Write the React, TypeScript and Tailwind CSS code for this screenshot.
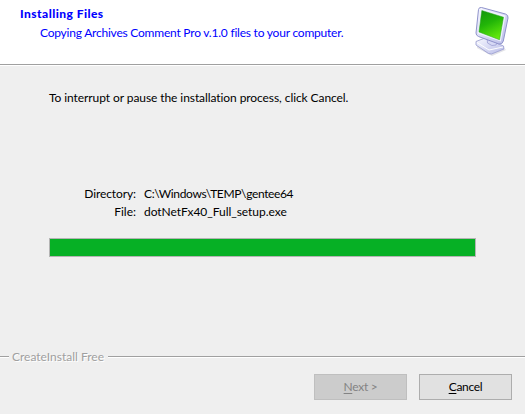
import React from "react";

function ComputerIcon() {
  return (
    <svg width="42" height="54" viewBox="0 0 42 54" aria-hidden="true">
      <defs>
        <linearGradient id="screen" x1="0.3" y1="0" x2="0.7" y2="1">
          <stop offset="0" stopColor="#159b0a" />
          <stop offset="0.4" stopColor="#22b508" />
          <stop offset="1" stopColor="#69ee0c" />
        </linearGradient>
        <linearGradient id="shell" x1="0" y1="0" x2="1" y2="1">
          <stop offset="0" stopColor="#f7f8ff" />
          <stop offset="1" stopColor="#b9bce8" />
        </linearGradient>
      </defs>
      <path d="M3 43 L17 52 L31 47 L32 48 L18 54 L3 46Z" fill="#e4e4e8" />
      <path d="M2 39.5 L11 36 L29.5 44 L30 47 L17.5 52 L14.5 51.5 L2 43Z" fill="url(#shell)" stroke="#9699cd" strokeWidth="0.8" />
      <path d="M3 40.5 L15 48 L29 45" fill="none" stroke="#ffffff" strokeWidth="1" />
      <path d="M13 35 L13.5 41 Q18 45 22 43 L24 38Z" fill="#d7d9f5" stroke="#9598cf" strokeWidth="0.7" />
      <path d="M7.5 5.5 Q5 5 4.5 7.5 L2 31 Q2 33.5 4.5 34.5 L25 42 Q28.5 42.5 29.3 39 L34 16 Q34.5 13 31.5 12Z" fill="url(#shell)" stroke="#9093cc" strokeWidth="1" />
      <path d="M7 7 L31.5 13.5 L26.8 39.5 L4 31.5Z" fill="#f2f3ff" />
      <path d="M7.8 8.5 L29.5 15.2 L25.5 37.8 L5 30Z" fill="url(#screen)" stroke="#23a01a" strokeWidth="0.5" />
    </svg>
  );
}

export default function App() {
  return (
    <main className="flex h-[414px] w-[525px] flex-col overflow-hidden bg-[#efefef] font-['Lato','Noto_Sans',sans-serif] text-[12px] leading-4 whitespace-nowrap text-black [font-variant-ligatures:none]">
      <header className="flex h-[66px] shrink-0 justify-between border-b border-white bg-white text-[#0000ff] shadow-[inset_0_-1px_0_#a0a0a0]">
        <div className="pt-[6px] pl-5">
          <h1 className="font-black tracking-[0.46px]">Installing Files</h1>
          <p className="mt-[3px] pl-5 tracking-[-0.22px]">Copying Archives Comment Pro v.1.0 files to your computer.</p>
        </div>
        <div className="mr-[9px] pt-[2px]">
          <ComputerIcon />
        </div>
      </header>
      <section className="h-[290px] shrink-0 pt-[24px] pr-[49px] pl-[49px]">
        <p className="tracking-[-0.08px]">To interrupt or pause the installation process, click Cancel.</p>
        <dl className="mt-[80px] grid grid-cols-[87px_1fr] gap-x-2 gap-y-[2px]">
          <dt className="text-right tracking-[-0.1px]">Directory:</dt>
          <dd className="tracking-[-0.36px]">C:\Windows\TEMP\gentee64</dd>
          <dt className="text-right">File:</dt>
          <dd className="tracking-[-0.04px]">dotNetFx40_Full_setup.exe</dd>
        </dl>
        <div className="mt-[18px] h-[19px] border border-[#b4b4b4] bg-[#06b025]" />
      </section>
      <footer>
        <div className="flex h-0 items-center">
          <span className="mt-[2px] h-[2px] w-[9px] border-b border-white bg-[#a0a0a0]" />
          <span className="w-[99px] pt-[2px] pl-[3px] text-[#a0a0a0] [text-shadow:1px_1px_0_#ffffff]">CreateInstall Free</span>
          <span className="mt-[2px] h-[2px] grow border-b border-white bg-[#a0a0a0]" />
        </div>
        <div className="mt-[18px] flex justify-end gap-3 pr-[13px]">
          <button disabled className="h-[26px] w-[93px] border border-[#bfbfbf] bg-[#cccccc] tracking-[-0.3px] text-[#838383]">
            <span className="underline underline-offset-2">N</span>ext &gt;
          </button>
          <button className="h-[26px] w-[93px] border border-[#adadad] bg-[#e1e1e1] tracking-[-0.3px]">
            <span className="underline underline-offset-2">C</span>ancel
          </button>
        </div>
      </footer>
    </main>
  );
}
